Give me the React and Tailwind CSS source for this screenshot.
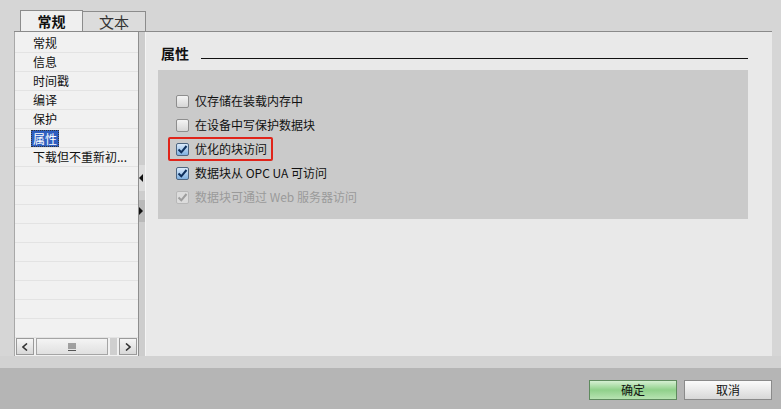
import { useState } from 'react';

const navItems = ['常规', '信息', '时间戳', '编译', '保护', '属性', '下载但不重新初...'];

function CheckBox({ checked, disabled }) {
  return (
    <span
      className={
        'w-[13px] h-[13px] rounded-[2px] border flex items-center justify-center shrink-0 ' +
        (disabled
          ? 'border-[#b8b8b8] bg-[#dcdcdc]'
          : checked
          ? 'border-[#4d6580] bg-gradient-to-b from-[#dbeafa] to-[#7fb0e0]'
          : 'border-[#8e8e8e] bg-gradient-to-b from-[#f4f4f4] to-[#d6d6d6]')
      }
    >
      {checked && (
        <svg width="11" height="11" viewBox="0 0 11 11">
          <path
            d="M1.5 5.5 L4.3 8.3 L9.5 2"
            fill="none"
            stroke={disabled ? '#9e9e9e' : '#0e2f5c'}
            strokeWidth="2"
          />
        </svg>
      )}
    </span>
  );
}

function Option({ label, checked, disabled }) {
  return (
    <div className={'flex items-center gap-[6px] h-[24px] ' + (disabled ? 'text-[#9a9a9a]' : 'text-[#111]')}>
      <CheckBox checked={checked} disabled={disabled} />
      <span>{label}</span>
    </div>
  );
}

export default function App() {
  const [selected] = useState(5);

  return (
    <div
      className="w-[781px] h-[409px] bg-[#d6d6d6] flex flex-col overflow-hidden text-[12px] text-[#111]"
      style={{ fontFamily: '"Noto Sans CJK SC", "Noto Sans", sans-serif' }}
    >
      {/* tabs */}
      <div className="flex pt-[10px] pl-[20px] h-[31px]">
        <div className="w-[63px] h-[21px] bg-[#efefef] border border-b-0 border-[#8c8c8c] flex items-center justify-center font-bold text-[14px] leading-none">
          常规
        </div>
        <div className="w-[63px] h-[20px] mt-[1px] bg-[#dcdcdc] border border-b-0 border-l-0 border-[#8c8c8c] flex items-center justify-center text-[15px] text-[#333] leading-none">
          文本
        </div>
      </div>

      {/* main area */}
      <div className="flex ml-[14px] mr-[9px] h-[325px] border-t border-[#8a8a8a]">
        {/* nav list */}
        <div className="w-[124px] bg-[#f1f1f1] border-l border-[#a8a8a8] flex flex-col pt-[2px]">
          <div className="flex-1">
            {navItems.map((item, i) => (
              <div key={item} className="h-[19px] border-b border-[#e3e3e3] pl-[18px] flex items-center">
                <span
                  className={
                    i === selected
                      ? 'bg-[#2f5fc0] text-[#ffffff] border border-dotted border-[#333] leading-[15px] px-[1px] -ml-[2px]'
                      : 'leading-none'
                  }
                >
                  {item}
                </span>
              </div>
            ))}
            {[0, 1, 2, 3, 4, 5, 6, 7, 8].map((n) => (
              <div key={n} className="h-[19px] border-b border-[#e3e3e3]" />
            ))}
          </div>
          <div className="h-[19px] mx-[1px] mb-[1px] flex items-center gap-[2px]">
            <div className="w-[18px] h-[17px] border border-[#9a9a9a] bg-gradient-to-b from-[#f6f6f6] to-[#d8d8d8] flex items-center justify-center">
              <svg width="6" height="8" viewBox="0 0 6 8">
                <path d="M5 0.5 L1 4 L5 7.5" fill="none" stroke="#333" strokeWidth="1.6" />
              </svg>
            </div>
            <div className="w-[72px] h-[17px] border border-[#a5a5a5] bg-gradient-to-b from-[#f4f4f4] to-[#e0e0e0] flex items-center justify-center">
              <svg width="10" height="8" viewBox="0 0 10 8">
                <path d="M2 0v6M4 0v6M6 0v6M8 0v6M1 7.5h8" stroke="#555" strokeWidth="1" />
              </svg>
            </div>
            <div className="flex-1 h-[17px] bg-[#cfcfcf]" />
            <div className="w-[18px] h-[17px] border border-[#9a9a9a] bg-gradient-to-b from-[#f6f6f6] to-[#d8d8d8] flex items-center justify-center">
              <svg width="6" height="8" viewBox="0 0 6 8">
                <path d="M1 0.5 L5 4 L1 7.5" fill="none" stroke="#333" strokeWidth="1.6" />
              </svg>
            </div>
          </div>
        </div>

        {/* splitter */}
        <div className="w-[8px] bg-[#cdcdcd] border-l border-[#8e8e8e] border-r border-r-[#f4f4f4] flex flex-col pt-[133px]">
          <div className="h-[26px] bg-[#dcdcdc] flex items-center justify-start">
            <svg width="5" height="8" viewBox="0 0 5 8">
              <path d="M4 0 L0 4 L4 8 Z" fill="#111" />
            </svg>
          </div>
          <div className="h-[9px]" />
          <div className="h-[22px] bg-[#b9b9b9] flex items-center justify-start">
            <svg width="5" height="8" viewBox="0 0 5 8">
              <path d="M0 0 L4 4 L0 8 Z" fill="#111" />
            </svg>
          </div>
        </div>

        {/* property panel */}
        <div className="flex-1 bg-[#e9e9e9] pl-[12px] pr-[24px] pt-[10px]">
          <div className="flex items-end h-[18px] pl-[3px]">
            <span className="font-bold text-[14px] leading-none">属性</span>
            <div className="flex-1 ml-[12px] mb-[1px] border-b border-[#111]" />
          </div>
          <div className="mt-[10px] h-[149px] bg-[#cacaca] pl-[10px] pt-[19px] flex flex-col">
            <div className="pl-[8px]">
              <Option label="仅存储在装载内存中" checked={false} />
              <Option label="在设备中写保护数据块" checked={false} />
            </div>
            <div className="w-[105px] h-[24px] border-2 border-[#e0241a] rounded-[2px] pl-[6px] flex items-center">
              <div className="flex items-center gap-[6px]">
                <CheckBox checked />
                <span>优化的块访问</span>
              </div>
            </div>
            <div className="pl-[8px]">
              <Option label="数据块从 OPC UA 可访问" checked />
              <Option label="数据块可通过 Web 服务器访问" checked disabled />
            </div>
          </div>
        </div>
      </div>

      {/* lower strip */}
      <div className="h-[12px] bg-[#d2d2d2]" />

      {/* button bar */}
      <div className="flex-1 bg-[#b5b5b5] flex justify-end items-start pt-[12px] pr-[9px] gap-[7px]">
        <button className="w-[88px] h-[20px] border border-[#5e8a5e] bg-gradient-to-b from-[#d5f0d2] via-[#8fd08a] to-[#b7e3b2] text-[12px] leading-none">
          确定
        </button>
        <button className="w-[88px] h-[20px] border border-[#8a8a8a] bg-gradient-to-b from-[#fbfbfb] to-[#d8d8d8] text-[12px] leading-none">
          取消
        </button>
      </div>
    </div>
  );
}
